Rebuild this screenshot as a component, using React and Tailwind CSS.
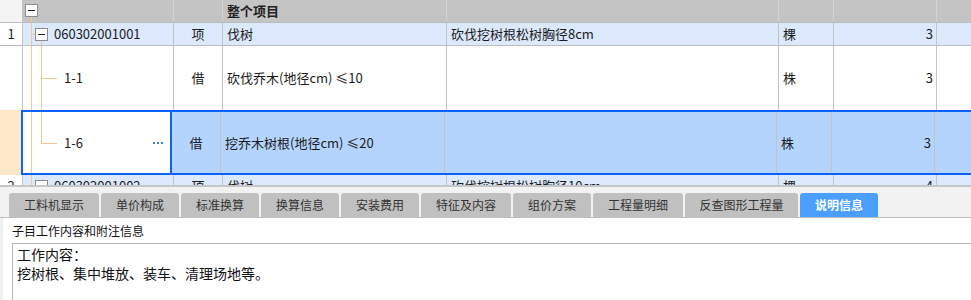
import React from 'react';

const line = 'bg-[#f7c88d]';

const tabs = [
  { label: '工料机显示', w: 'w-[90px]' },
  { label: '单价构成', w: 'w-[78px]' },
  { label: '标准换算', w: 'w-[78px]' },
  { label: '换算信息', w: 'w-[78px]' },
  { label: '安装费用', w: 'w-[78px]' },
  { label: '特征及内容', w: 'w-[90px]' },
  { label: '组价方案', w: 'w-[78px]' },
  { label: '工程量明细', w: 'w-[90px]' },
  { label: '反查图形工程量', w: 'w-[113px]' },
  { label: '说明信息', w: 'w-[78px]', active: true },
];

function MinusBox({ className }) {
  return (
    <span className={`absolute flex h-[13px] w-[13px] items-center justify-center border border-[#8c8c8c] bg-white ${className}`}>
      <span className="h-px w-[7px] bg-[#222]" />
    </span>
  );
}

function Cell({ w, className = '', children }) {
  return (
    <div className={`flex h-full shrink-0 items-center border-r border-[#c3c3c3] px-[4px] ${w} ${className}`}>
      {children}
    </div>
  );
}

function ItemRow({ no, code, name, feature, unit, qty, h = 'h-[23px]' }) {
  return (
    <div className={`flex ${h} border-b border-[#bcbcbc]`}>
      <Cell w="w-[23px]" className="justify-center bg-white">{no}</Cell>
      <div className="relative flex h-full w-[151px] shrink-0 items-center border-r border-[#c3c3c3] bg-[#dce8fc] pl-[31px]">
        <span className={`absolute bottom-0 left-[8px] top-0 w-px ${line}`} />
        <span className={`absolute left-[8px] top-[11px] h-px w-[4px] ${line}`} />
        <span className={`absolute bottom-0 left-[18px] top-[18px] w-px ${line}`} />
        <MinusBox className="left-[12px] top-[5px]" />
        {code}
      </div>
      <Cell w="w-[49px]" className="justify-center bg-[#dce8fc]">项</Cell>
      <Cell w="w-[224px]" className="bg-[#dce8fc]">{name}</Cell>
      <Cell w="w-[332px]" className="bg-[#dce8fc]">{feature}</Cell>
      <Cell w="w-[55px]" className="bg-[#dce8fc]">{unit}</Cell>
      <Cell w="w-[103px]" className="justify-end bg-[#dce8fc] pr-[3px]">{qty}</Cell>
      <div className="h-full flex-1 bg-[#dce8fc]" />
    </div>
  );
}

export default function App() {
  return (
    <div className="h-[300px] w-[971px] overflow-hidden bg-white font-['Noto_Sans_CJK_SC',sans-serif] text-[13px] text-[#1b1b1b]">
      <div className="h-[185px] overflow-hidden">
        {/* header */}
        <div className="flex h-[23px] border-b border-[#bcbcbc] bg-[#c4c4c4]">
          <div className="h-full w-[23px] shrink-0 border-r border-[#c3c3c3] bg-[#f4f4f4]" />
          <div className="relative h-full w-[151px] shrink-0 border-r border-[#d3d3d3]">
            <MinusBox className="left-[2px] top-[4px]" />
            <span className={`absolute bottom-0 left-[8px] top-[17px] w-px ${line}`} />
          </div>
          <div className="h-full w-[49px] shrink-0 border-r border-[#d3d3d3]" />
          <div className="flex h-full w-[224px] shrink-0 items-center border-r border-[#d3d3d3] px-[4px] font-bold text-[#222]">
            整个项目
          </div>
          <div className="h-full w-[332px] shrink-0 border-r border-[#d3d3d3]" />
          <div className="h-full w-[55px] shrink-0 border-r border-[#d3d3d3]" />
          <div className="h-full w-[103px] shrink-0 border-r border-[#d3d3d3]" />
          <div className="flex-1" />
        </div>

        <ItemRow no="1" code="060302001001" name="伐树" feature="砍伐挖树根松树胸径8cm" unit="棵" qty="3" />

        {/* 1-1 */}
        <div className="flex h-[64px]">
          <Cell w="w-[23px]" className="bg-white" />
          <div className="relative flex h-full w-[151px] shrink-0 items-center border-r border-[#c3c3c3] pl-[41px]">
            <span className={`absolute bottom-0 left-[8px] top-0 w-px ${line}`} />
            <span className={`absolute bottom-0 left-[18px] top-0 w-px ${line}`} />
            <span className={`absolute left-[18px] top-1/2 h-px w-[16px] ${line}`} />
            1-1
          </div>
          <Cell w="w-[49px]" className="justify-center">借</Cell>
          <Cell w="w-[224px]">砍伐乔木(地径cm) ≤10</Cell>
          <Cell w="w-[332px]" />
          <Cell w="w-[55px]">株</Cell>
          <Cell w="w-[103px]" className="justify-end pr-[3px]">3</Cell>
          <div className="flex-1" />
        </div>

        {/* 1-6 selected */}
        <div className="flex h-[65px]">
          <div className="h-full w-[21px] shrink-0 bg-[#fde7c8]" />
          <div className="flex h-full flex-1 border-y-2 border-l-2 border-[#0a62f8]">
            <div className="relative flex h-full w-[149px] shrink-0 items-center border-r-2 border-[#0a62f8] bg-white pl-[41px]">
              <span className={`absolute bottom-0 left-[8px] top-0 w-px ${line}`} />
              <span className={`absolute left-[18px] top-0 h-1/2 w-px ${line}`} />
              <span className={`absolute left-[18px] top-1/2 h-px w-[16px] ${line}`} />
              1-6
              <span className="ml-auto mr-[7px] flex gap-[2px]">
                <span className="h-[2px] w-[2px] bg-[#3b80d6]" />
                <span className="h-[2px] w-[2px] bg-[#3b80d6]" />
                <span className="h-[2px] w-[2px] bg-[#3b80d6]" />
              </span>
            </div>
            <Cell w="w-[49px]" className="justify-center bg-[#b4d4fd]">借</Cell>
            <Cell w="w-[224px]" className="bg-[#b4d4fd]">挖乔木树根(地径cm) ≤20</Cell>
            <Cell w="w-[332px]" className="bg-[#b4d4fd]" />
            <Cell w="w-[55px]" className="bg-[#b4d4fd]">株</Cell>
            <Cell w="w-[103px]" className="justify-end bg-[#b4d4fd] pr-[3px]">3</Cell>
            <div className="h-full flex-1 bg-[#b4d4fd]" />
          </div>
        </div>

        <ItemRow no="2" code="060302001002" name="伐树" feature="砍伐挖树根松树胸径10cm" unit="棵" qty="4" />
      </div>

      <div className="h-[2px] bg-[#c6c6c6]" />

      <div className="flex gap-[2px] border-b border-[#c0c0c0] bg-[#f2f2f2] pl-[9px] pt-[6px]">
        {tabs.map((tab) => (
          <div
            key={tab.label}
            className={`flex h-[24px] items-center justify-center rounded-t-[3px] text-[12px] ${tab.w} ${
              tab.active ? 'bg-[#4a9ffe] font-bold text-white' : 'bg-[#c0c0c0] text-[#333]'
            }`}
          >
            {tab.label}
          </div>
        ))}
      </div>

      <div className="h-full border-l-[3px] border-[#f0f0f0] bg-white">
        <div className="flex h-[25px] items-center pl-[9px] text-[12px] text-[#111]">子目工作内容和附注信息</div>
        <div className="ml-[9px] h-full border-l border-t border-[#b5b5b5] pl-[4px] pt-[1px] text-[14px] leading-[19px] text-[#111]">
          <div>工作内容：</div>
          <div>挖树根、集中堆放、装车、清理场地等。</div>
        </div>
      </div>
    </div>
  );
}
